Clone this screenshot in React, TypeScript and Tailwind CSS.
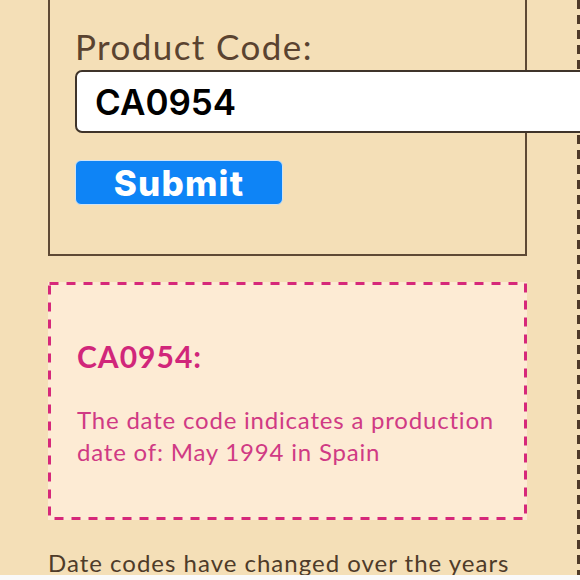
import React from "react";

export default function App() {
  return (
    <div className="w-[580px] h-[580px] overflow-hidden flex flex-col bg-[#fafafa]">
      <div className="h-[575px] overflow-hidden bg-[#f4dfb7] flex">
        <div className="relative w-[580px] h-full pr-[3px] pl-[48px] flex flex-col" style={{ fontFamily: "Lato, 'Noto Sans', sans-serif" }}>
          <svg className="absolute right-0 top-0 pointer-events-none" width="3" height="575" aria-hidden="true">
            <line x1="1.5" y1="0" x2="1.5" y2="575" stroke="#4f3a28" strokeWidth="3" strokeDasharray="9 6" />
          </svg>
          <div className="w-[479px] border-2 border-t-0 border-[#5e4934] pl-[25px] pt-[25px] pb-[49px] flex flex-col items-start">
            <label className="text-[35px] leading-[42px] text-[#5a4330] tracking-[1.4px]">Product Code:</label>
            <div className="relative z-10 mt-[3px] w-[560px] h-[63px] shrink-0 bg-white border-2 border-[#3f342a] rounded-[7px] pl-[18px] flex items-center">
              <span className="text-[35px] leading-[42px] font-semibold text-black" style={{ fontFamily: "Inter, 'Liberation Sans', sans-serif" }}>CA0954</span>
            </div>
            <button className="mt-[27px] w-[208px] h-[45px] bg-[#0e84f6] border border-[#cfe3f5] rounded-[6px] flex items-center justify-center text-white text-[35px] leading-[40px] font-extrabold tracking-[1.2px]" style={{ fontFamily: "Inter, 'Liberation Sans', sans-serif" }}>
              Submit
            </button>
          </div>
          <div className="relative mt-[26px] w-[479px] h-[238px] shrink-0 bg-[#fdebd4] pl-[29px] pt-[56px]">
            <svg className="absolute inset-0 pointer-events-none" width="479" height="238" aria-hidden="true">
              <rect x="1.5" y="1.5" width="476" height="235" fill="none" stroke="#d6287a" strokeWidth="3" strokeDasharray="9 8" />
            </svg>
            <h3 className="text-[30px] leading-[36px] font-bold text-[#d1267a] tracking-[1px]">CA0954:</h3>
            <p className="mt-[30px] text-[24px] leading-[32px] text-[#d03a84] tracking-[0.8px]">
              The date code indicates a production
              <br />
              date of: May 1994 in Spain
            </p>
          </div>
          <p className="mt-[27px] text-[24px] leading-[32px] text-[#4e3b29] tracking-[1px] whitespace-nowrap">
            Date codes have changed over the years
          </p>
        </div>
      </div>
      <div className="h-[5px] bg-[#fafafa]" />
    </div>
  );
}
